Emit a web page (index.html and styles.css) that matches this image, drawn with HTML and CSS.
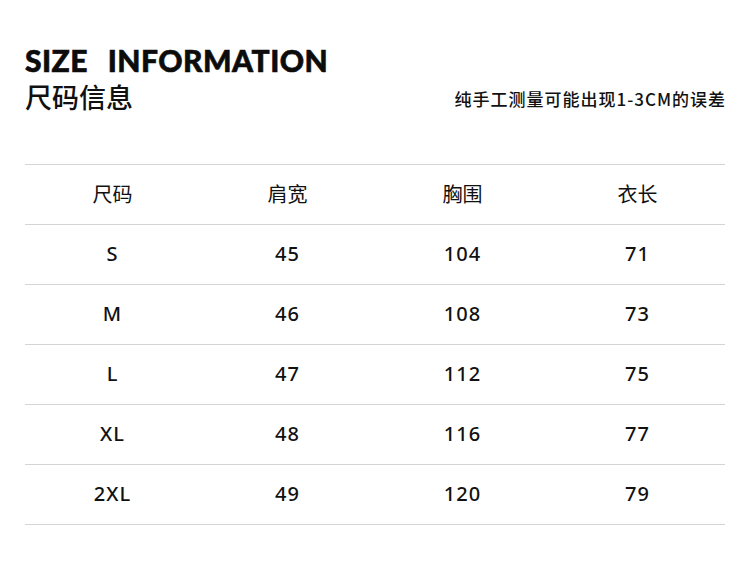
FILE: index.html
```html
<!DOCTYPE html>
<html lang="zh">
<head>
<meta charset="utf-8">
<link rel="stylesheet" href="styles.css">
</head>
<body>
<div class="page">
  <header class="head">
    <div class="titles">
      <div class="en">SIZE INFORMATION</div>
      <div class="zh">尺码信息</div>
    </div>
    <div class="note">纯手工测量可能出现1-3CM的误差</div>
  </header>
  <div class="table">
    <div class="row th"><span>尺码</span><span>肩宽</span><span>胸围</span><span>衣长</span></div>
    <div class="row"><span>S</span><span>45</span><span>104</span><span>71</span></div>
    <div class="row"><span>M</span><span>46</span><span>108</span><span>73</span></div>
    <div class="row"><span>L</span><span>47</span><span>112</span><span>75</span></div>
    <div class="row"><span>XL</span><span>48</span><span>116</span><span>77</span></div>
    <div class="row"><span>2XL</span><span>49</span><span>120</span><span>79</span></div>
  </div>
</div>
</body>
</html>
```
FILE: styles.css
```css
html, body { margin: 0; padding: 0; background: #fff; }
body { width: 750px; height: 566px; overflow: hidden; color: #111; font-family: "Noto Sans", "Noto Sans CJK SC", sans-serif; }
.page { padding: 0 25px; }
.head { display: flex; justify-content: space-between; align-items: flex-end; padding-top: 38px; height: 124px; box-sizing: border-box; }
.titles { margin-bottom: 8px; }
.en { font-family: Lato, sans-serif; font-weight: 900; font-size: 30px; line-height: 36px; letter-spacing: 0.5px; word-spacing: 12px; color: #0c0c0c; -webkit-text-stroke: 0.6px #0c0c0c; }
.zh { font-family: "Noto Sans CJK SC", sans-serif; font-weight: 500; font-size: 27px; line-height: 38px; margin-top: 0; }
.note { font-family: "Noto Sans CJK SC", sans-serif; font-weight: 500; font-size: 17px; letter-spacing: 1px; margin-right: -1px; line-height: 24px; margin-bottom: 13px; }
.table { margin-top: 40px; border-top: 1px solid #d4d4d4; }
.row { display: grid; grid-template-columns: repeat(4, 1fr); height: 60px; border-bottom: 1px solid #d4d4d4; box-sizing: border-box; align-items: center; text-align: center; }
.row span { font-size: 20px; font-weight: 500; letter-spacing: 1px; line-height: 24px; margin-top: -2px; }
.th span { font-family: "Noto Sans CJK SC", sans-serif; font-weight: 400; letter-spacing: 0; }
```
